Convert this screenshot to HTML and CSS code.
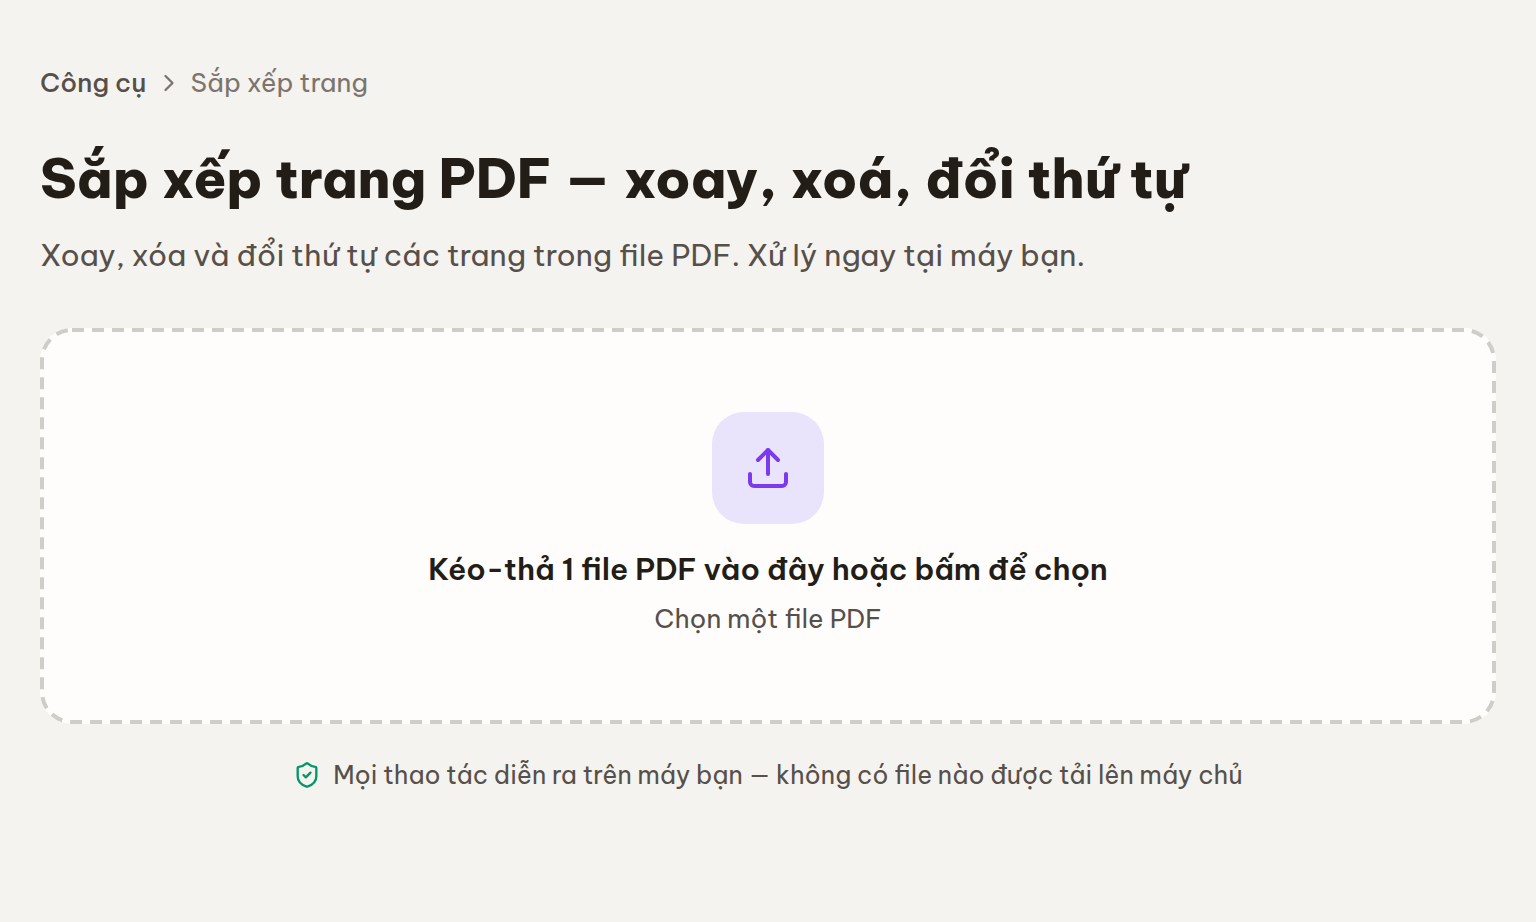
FILE: index.html
```
<!DOCTYPE html>
<html lang="vi">
<head>
  <meta charset="UTF-8">
  <meta name="viewport" content="width=device-width, initial-scale=1">
  <title>Sắp xếp trang PDF</title>
  <link rel="stylesheet" href="styles.css">
</head>
<body>
  <main class="page">
    <nav class="breadcrumb" aria-label="Breadcrumb">
      <a href="#">Công cụ</a>
      <svg class="chevron" viewBox="0 0 24 24" aria-hidden="true"><path d="m9 18 6-6-6-6"/></svg>
      <span aria-current="page">Sắp xếp trang</span>
    </nav>

    <h1>Sắp xếp trang PDF — xoay, xoá, đổi thứ tự</h1>
    <p class="lead">Xoay, xóa và đổi thứ tự các trang trong file PDF. Xử lý ngay tại máy bạn.</p>

    <label class="dropzone" for="pdf-file">
      <svg class="dropzone-border" aria-hidden="true"><rect x="2" y="2" rx="30"/></svg>
      <input id="pdf-file" class="file-input" type="file" accept="application/pdf">
      <span class="upload-icon">
        <svg viewBox="0 0 24 24" aria-hidden="true">
          <path d="M12 15V3"/>
          <path d="m7 8 5-5 5 5"/>
          <path d="M3 15v4a2 2 0 0 0 2 2h14a2 2 0 0 0 2-2v-4"/>
        </svg>
      </span>
      <span class="dropzone-title">Kéo-thả 1 file PDF vào đây hoặc bấm để chọn</span>
      <span class="dropzone-hint">Chọn một file PDF</span>
    </label>

    <p class="privacy">
      <svg class="shield" viewBox="0 0 24 24" aria-hidden="true">
        <path d="M20 13c0 5-3.5 7.5-7.66 8.95a1 1 0 0 1-.67-.01C7.5 20.5 4 18 4 13V6a1 1 0 0 1 1-1c2 0 4.5-1.2 6.24-2.72a1.17 1.17 0 0 1 1.52 0C14.51 3.81 17 5 19 5a1 1 0 0 1 1 1z"/>
        <path d="m9 12 2 2 4-4"/>
      </svg>
      <span>Mọi thao tác diễn ra trên máy bạn — không có file nào được tải lên máy chủ</span>
    </p>
  </main>
</body>
</html>
```
FILE: styles.css
```
* {
  box-sizing: border-box;
}
body {
  margin: 0;
  background: #f4f3ef;
  color: #231d17;
  font-family: "Be Vietnam Pro", Inter, sans-serif;
}
h1, p {
  margin: 0;
}
svg {
  flex: none;
  fill: none;
  stroke: currentColor;
  stroke-width: 2;
  stroke-linecap: round;
  stroke-linejoin: round;
}
.page {
  padding: 64px 40px;
}
.breadcrumb {
  display: flex;
  align-items: center;
  gap: 8px;
  margin-bottom: 42px;
  font-size: 26px;
  line-height: 38px;
  color: #7c756d;
}
.breadcrumb a {
  color: #57504a;
  font-weight: 500;
  text-decoration: none;
}
.breadcrumb a:hover {
  color: #231d17;
}
.chevron {
  width: 28px;
  height: 28px;
}
h1 {
  font-size: 54px;
  line-height: 68px;
  font-weight: 800;
}
.lead {
  margin-top: 20px;
  font-size: 30px;
  line-height: 46px;
  color: #57504a;
}
.dropzone {
  position: relative;
  display: flex;
  flex-direction: column;
  align-items: center;
  margin-top: 50px;
  padding: 84px 40px 86px;
  border-radius: 32px;
  background: #fffdfc;
  color: #231d17;
  text-align: center;
  cursor: pointer;
}
/* dashed outline, drawn as SVG to control the dash length */
.dropzone-border {
  position: absolute;
  inset: 0;
  width: 100%;
  height: 100%;
  color: #cfcdc8;
  stroke-width: 4;
  stroke-linecap: butt;
  stroke-dasharray: 12 8;
}
.dropzone-border rect {
  width: calc(100% - 4px);
  height: calc(100% - 4px);
}
.dropzone:hover .dropzone-border,
.dropzone:focus-within .dropzone-border {
  color: #7c3aed;
}
.file-input {
  position: absolute;
  width: 1px;
  height: 1px;
  opacity: 0;
}
.upload-icon {
  display: flex;
  align-items: center;
  justify-content: center;
  width: 112px;
  height: 112px;
  border-radius: 32px;
  background: #e9e3fb;
  color: #7c3aed;
}
.upload-icon svg {
  width: 48px;
  height: 48px;
}
.dropzone-title {
  margin-top: 24px;
  font-size: 30px;
  line-height: 42px;
  font-weight: 600;
}
.dropzone-hint {
  margin-top: 10px;
  font-size: 26px;
  line-height: 38px;
  color: #57504a;
}
.privacy {
  display: flex;
  align-items: center;
  justify-content: center;
  gap: 12px;
  margin-top: 32px;
  font-size: 25px;
  line-height: 38px;
  color: #57504a;
}
.shield {
  width: 28px;
  height: 28px;
  color: #059669;
}
```
